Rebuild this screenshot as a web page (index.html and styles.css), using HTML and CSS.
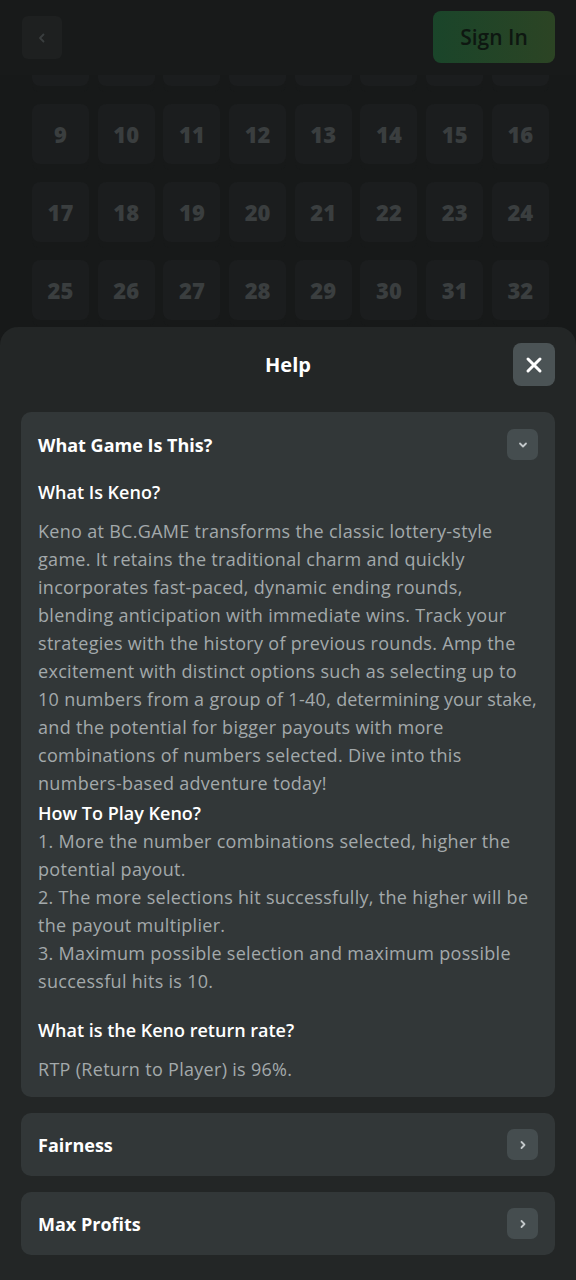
FILE: index.html
```html
<!DOCTYPE html>
<html>
<head>
<meta charset="utf-8">
<link rel="stylesheet" href="styles.css">
</head>
<body>
<div class="page">
  <header class="topbar">
    <div class="back"><svg width="12" height="12" viewBox="0 0 12 12"><path d="M7.5 2.5 4 6l3.5 3.5" fill="none" stroke="#3a3e3f" stroke-width="1.8" stroke-linecap="round" stroke-linejoin="round"/></svg></div>
    <div class="signin">Sign In</div>
  </header>
  <div class="board">
    <div class="stubs">
      <div class="stub"></div><div class="stub"></div><div class="stub"></div><div class="stub"></div><div class="stub"></div><div class="stub"></div><div class="stub"></div><div class="stub"></div>
    </div>
    <div class="grid">
      <div class="cell">9</div><div class="cell">10</div><div class="cell">11</div><div class="cell">12</div><div class="cell">13</div><div class="cell">14</div><div class="cell">15</div><div class="cell">16</div>
      <div class="cell">17</div><div class="cell">18</div><div class="cell">19</div><div class="cell">20</div><div class="cell">21</div><div class="cell">22</div><div class="cell">23</div><div class="cell">24</div>
      <div class="cell">25</div><div class="cell">26</div><div class="cell">27</div><div class="cell">28</div><div class="cell">29</div><div class="cell">30</div><div class="cell">31</div><div class="cell">32</div>
    </div>
  </div>
  <section class="sheet">
    <div class="sheet-head">
      <h2 class="sheet-title">Help</h2>
      <div class="close"><svg width="18" height="18" viewBox="0 0 18 18"><path d="M3 3l12 12M15 3 3 15" stroke="#fff" stroke-width="3" stroke-linecap="round"/></svg></div>
    </div>
    <div class="card open">
      <div class="card-head">
        <span class="card-title">What Game Is This?</span>
        <span class="chev"><svg width="12" height="12" viewBox="0 0 12 12"><path d="M3 4.5 6 7.5l3-3" fill="none" stroke="#c3c8ca" stroke-width="1.8" stroke-linecap="round" stroke-linejoin="round"/></svg></span>
      </div>
      <h3 class="q first">What Is Keno?</h3>
      <p class="txt">Keno at BC.GAME transforms the classic lottery-style game. It retains the traditional charm and quickly incorporates fast-paced, dynamic ending rounds, blending anticipation with immediate wins. Track your strategies with the history of previous rounds. Amp the excitement with distinct options such as selecting up to 10 numbers from a group of 1-40, <span class="snug">determining your stake,</span> and the potential for bigger payouts with more combinations of numbers selected. Dive into this numbers-based adventure today!</p>
      <h3 class="q tight">How To Play Keno?</h3>
      <p class="txt">1. More the number combinations selected, higher the potential payout.</p>
      <p class="txt">2. The more selections hit successfully, the higher will be the payout multiplier.</p>
      <p class="txt">3. Maximum possible selection and maximum possible successful hits is 10.</p>
      <h3 class="q">What is the Keno return rate?</h3>
      <p class="txt">RTP (Return to Player) is 96%.</p>
    </div>
    <div class="card">
      <div class="card-head">
        <span class="card-title">Fairness</span>
        <span class="chev"><svg width="12" height="12" viewBox="0 0 12 12"><path d="M4.5 3 7.5 6l-3 3" fill="none" stroke="#c3c8ca" stroke-width="1.8" stroke-linecap="round" stroke-linejoin="round"/></svg></span>
      </div>
    </div>
    <div class="card">
      <div class="card-head">
        <span class="card-title">Max Profits</span>
        <span class="chev"><svg width="12" height="12" viewBox="0 0 12 12"><path d="M4.5 3 7.5 6l-3 3" fill="none" stroke="#c3c8ca" stroke-width="1.8" stroke-linecap="round" stroke-linejoin="round"/></svg></span>
      </div>
    </div>
  </section>
</div>
</body>
</html>
```
FILE: styles.css
```css
* { box-sizing: border-box; }
html, body { margin: 0; padding: 0; }
body {
  background: #171919;
  font-family: "Open Sans", "Noto Sans", sans-serif;
  width: 576px;
  height: 1280px;
  overflow: hidden;
}
.page { display: flex; flex-direction: column; height: 1280px; }
.topbar {
  height: 75px;
  display: flex;
  justify-content: space-between;
  align-items: flex-start;
  padding: 0 21px 0 22px;
  background: #181a1a;
}
.back {
  margin-top: 16px;
  width: 40px;
  height: 43px;
  border-radius: 6px;
  background: #1e2020;
  display: flex;
  align-items: center;
  justify-content: center;
}
.signin {
  margin-top: 11px;
  width: 122px;
  height: 52px;
  border-radius: 8px;
  background: linear-gradient(90deg, #1a452a, #2c4424);
  color: #0e1711;
  font-weight: 600;
  font-size: 21px;
  display: flex;
  align-items: center;
  justify-content: center;
}
.board {
  height: 252px;
  display: flex;
  flex-direction: column;
  gap: 12px;
}
.stubs, .grid {
  padding: 0 28px 0 32px;
  display: grid;
  grid-template-columns: repeat(8, 57px);
  column-gap: 8.7px;
  row-gap: 12px;
}
.stub {
  height: 17px;
  border-radius: 0 0 8px 8px;
  background: #1b1d1e;
  box-shadow: inset 0 -6px 0 #171919;
}
.cell {
  height: 66px;
  border-radius: 8px;
  background: #1b1d1e;
  box-shadow: inset 0 -6px 0 #171919;
  display: flex;
  align-items: center;
  justify-content: center;
  padding-bottom: 6px;
  color: #3a3e3f;
  font-weight: 800;
  font-size: 22px;
}
.sheet {
  flex: 1;
  background: #232626;
  border-radius: 18px 18px 0 0;
  padding: 16px 21px 0;
  display: flex;
  flex-direction: column;
  gap: 16px;
}
.sheet-head {
  height: 43px;
  position: relative;
  display: flex;
  align-items: center;
  justify-content: center;
  margin-bottom: 10px;
}
.sheet-title {
  margin: 0;
  color: #fff;
  font-size: 20px;
  font-weight: 700;
}
.close {
  position: absolute;
  right: 0;
  top: 0;
  width: 42px;
  height: 43px;
  border-radius: 8px;
  background: #4b5355;
  display: flex;
  align-items: center;
  justify-content: center;
}
.card {
  background: #323738;
  border-radius: 10px;
  padding: 16px 17px;
}
.card.open { padding: 17px 15px 14px 17px; }
.card-head {
  height: 31px;
  display: flex;
  align-items: center;
  justify-content: space-between;
}
.card.open .card-head { margin-right: 2px; }
.card-title {
  color: #fff;
  font-size: 18px;
  font-weight: 700;
}
.chev {
  width: 31px;
  height: 31px;
  border-radius: 7px;
  background: #454d4f;
  display: flex;
  align-items: center;
  justify-content: center;
}
.q {
  margin: 21px 0 11px;
  color: #fff;
  font-size: 18px;
  line-height: 28px;
  font-weight: 600;
}
.q.first { margin-top: 18px; }
.q.tight { margin: 2px 0 0; }
.txt {
  margin: 0;
  color: #a3a9ab;
  font-size: 18px;
  line-height: 28px;
  letter-spacing: 0.3px;
}
.snug { letter-spacing: 0.05px; }
```
